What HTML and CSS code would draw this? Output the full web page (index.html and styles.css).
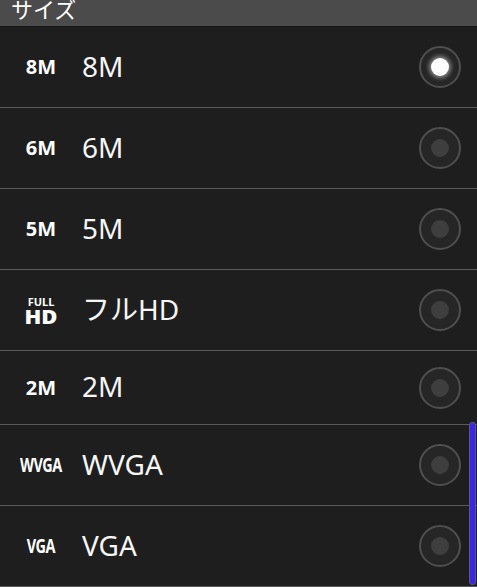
FILE: index.html
```html
<!DOCTYPE html>
<html lang="ja">
  <head>
    <meta charset="UTF-8" />
    <title>サイズ</title>
    <link rel="stylesheet" href="styles.css">
  </head>
  <body>
    <div class="dialog">
      <div class="title"><span>サイズ</span></div>

      <ul class="sizeList">
        <li class="row">
          <span class="badge">8M</span>
          <span class="label">8M</span>
          <span class="radio checked"></span>
        </li>
        <li class="row">
          <span class="badge">6M</span>
          <span class="label">6M</span>
          <span class="radio"></span>
        </li>
        <li class="row">
          <span class="badge">5M</span>
          <span class="label">5M</span>
          <span class="radio"></span>
        </li>
        <li class="row">
          <span class="badge stacked"><small>FULL</small><b>HD</b></span>
          <span class="label">フルHD</span>
          <span class="radio"></span>
        </li>
        <li class="row short">
          <span class="badge">2M</span>
          <span class="label">2M</span>
          <span class="radio"></span>
        </li>
        <li class="row">
          <span class="badge narrow">WVGA</span>
          <span class="label">WVGA</span>
          <span class="radio"></span>
        </li>
        <li class="row">
          <span class="badge narrow">VGA</span>
          <span class="label">VGA</span>
          <span class="radio"></span>
        </li>
      </ul>

      <!-- scroll indicator sits over the list -->
      <div class="scrollThumb"></div>
    </div>
  </body>
</html>
```

FILE: styles.css
```css
html,
body {
  margin: 0;
  padding: 0;
  background: #1e1e1e;
}

.dialog {
  position: relative;
  width: 477px;
  height: 587px;
  overflow: hidden;
  background: #1e1e1e;
  font-family: "Noto Sans", "Noto Sans CJK JP", sans-serif;
  color: #fff;
}

.title {
  height: 26px;
  border-bottom: 1px solid #161616;
  background: #4b4b4b;
  padding-left: 11px;
  overflow: hidden;
}

.title span {
  display: block;
  font-size: 22px;
  line-height: 22px;
  margin-top: -2px;
}

.sizeList {
  list-style: none;
  margin: 0;
  padding: 0;
}

.row {
  display: flex;
  align-items: center;
  height: 80px;
  border-bottom: 1px solid #5a5a5a;
}

.row.short {
  height: 73px;
}

.badge {
  width: 82px;
  text-align: center;
  font-weight: bold;
  font-size: 20px;
  line-height: 1;
}

.badge.stacked {
  display: flex;
  flex-direction: column;
  align-items: center;
  padding-top: 2px;
}

.badge.stacked small {
  display: block;
  font-size: 11px;
  line-height: 10px;
}

.badge.stacked b {
  display: block;
  font-size: 20px;
  line-height: 19px;
  transform: scaleX(1.1);
}

.badge.narrow {
  font-size: 19px;
  transform: scaleX(0.76);
  letter-spacing: -0.6px;
}

.label {
  flex: 1;
  font-size: 28px;
  line-height: 1;
  margin-top: -3px;
  color: #f6f6f6;
}

.radio {
  position: relative;
  width: 38px;
  height: 38px;
  margin-right: 16px;
  border: 2px solid #4f4f4f;
  border-radius: 50%;
  background: #262626;
}

.radio::after {
  content: "";
  position: absolute;
  left: 10px;
  top: 10px;
  width: 18px;
  height: 18px;
  border-radius: 50%;
  background: #3e3e3e;
}

.radio.checked::after {
  background: #fff;
  box-shadow: 0 0 4px 2px rgba(255, 255, 255, 0.45);
}

.scrollThumb {
  position: absolute;
  left: 469px;
  top: 422px;
  width: 5px;
  height: 161px;
  border: 1px solid #5b5b6a;
  border-radius: 3px;
  background: #3d22f2;
}
```
